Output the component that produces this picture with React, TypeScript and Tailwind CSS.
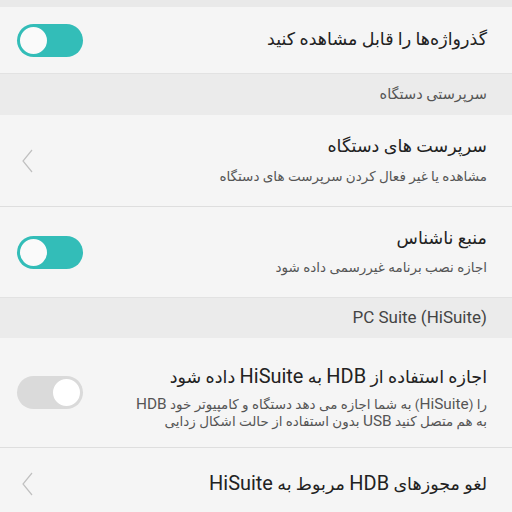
import React from "react";

const font = { fontFamily: 'Roboto, "DejaVu Sans", sans-serif' };

function Toggle({ on }: { on: boolean }) {
  if (on) {
    return (
      <div className="w-[66px] h-[33px] rounded-full bg-[#33bdb8] relative shrink-0">
        <div className="absolute left-[1px] top-[1px] w-[31px] h-[31px] rounded-full bg-[#fafafa] border-[2px] border-[#33bdb8]" />
      </div>
    );
  }
  return (
    <div className="w-[66px] h-[33px] rounded-full bg-[#dadada] relative shrink-0">
      <div className="absolute right-[1px] top-[1px] w-[31px] h-[31px] rounded-full bg-white border-[2px] border-[#dadada]" />
    </div>
  );
}

function Chevron() {
  return (
    <svg width="16" height="26" viewBox="0 0 16 26" className="shrink-0">
      <path d="M12 2 L3 13 L12 24" fill="none" stroke="#c0c0c0" strokeWidth="1.2" />
    </svg>
  );
}

function L({ children }: { children: React.ReactNode }) {
  return <span className="text-[1.14em]">{children}</span>;
}

export default function App() {
  return (
    <div dir="rtl" className="w-[512px] h-[512px] overflow-hidden bg-[#f5f5f5] text-[#222]" style={font}>
      <div className="h-[7px] bg-[#e9e9e9]" />
      <div className="h-[66px] flex items-center justify-between pr-[25px] pl-[17px] bg-[#f5f5f5]">
        <div className="text-[17.5px] leading-none">گذرواژه‌ها را قابل مشاهده کنید</div>
        <Toggle on />
      </div>
      <div className="h-[42px] flex items-center pr-[25px] bg-[#ebebeb] border-t border-[#e2e2e2] text-[14.5px] text-[#555]">
        سرپرستی دستگاه
      </div>
      <div className="h-[92px] flex items-center justify-between pr-[25px] pl-[20px] border-b border-[#dedede]">
        <div className="flex flex-col gap-[14px]">
          <div className="text-[17.5px] leading-none">سرپرست های دستگاه</div>
          <div className="text-[13.5px] leading-none text-[#555]">مشاهده یا غیر فعال کردن سرپرست های دستگاه</div>
        </div>
        <Chevron />
      </div>
      <div className="h-[90px] flex items-center justify-between pr-[25px] pl-[17px]">
        <div className="flex flex-col gap-[14px]">
          <div className="text-[17.5px] leading-none">منبع ناشناس</div>
          <div className="text-[13.5px] leading-none text-[#555]">اجازه نصب برنامه غیررسمی داده شود</div>
        </div>
        <Toggle on />
      </div>
      <div className="h-[41px] flex items-center pr-[25px] bg-[#ebebeb] border-t border-[#e2e2e2] text-[17px] text-[#444]">
        <span dir="ltr">PC Suite (HiSuite)</span>
      </div>
      <div className="h-[110px] flex items-center justify-between pr-[25px] pl-[17px] border-b border-[#dedede]">
        <div className="flex flex-col gap-[6px] pt-[12px]">
          <div className="text-[17.5px] leading-none mb-[4px]">
            اجازه استفاده از <L>HDB</L> به <L>HiSuite</L> داده شود
          </div>
          <div className="text-[13.5px] leading-[17px] text-[#555]">
            را (<L>HiSuite</L>) به شما اجازه می دهد دستگاه و کامپیوتر خود <L>HDB</L>
            <br />
            به هم متصل کنید <L>USB</L> بدون استفاده از حالت اشکال زدایی
          </div>
        </div>
        <Toggle on={false} />
      </div>
      <div className="h-[63px] flex items-center justify-between pr-[25px] pl-[20px] pt-[8px]">
        <div className="text-[17.5px] leading-none">
          لغو مجوزهای <L>HDB</L> مربوط به <L>HiSuite</L>
        </div>
        <Chevron />
      </div>
    </div>
  );
}
